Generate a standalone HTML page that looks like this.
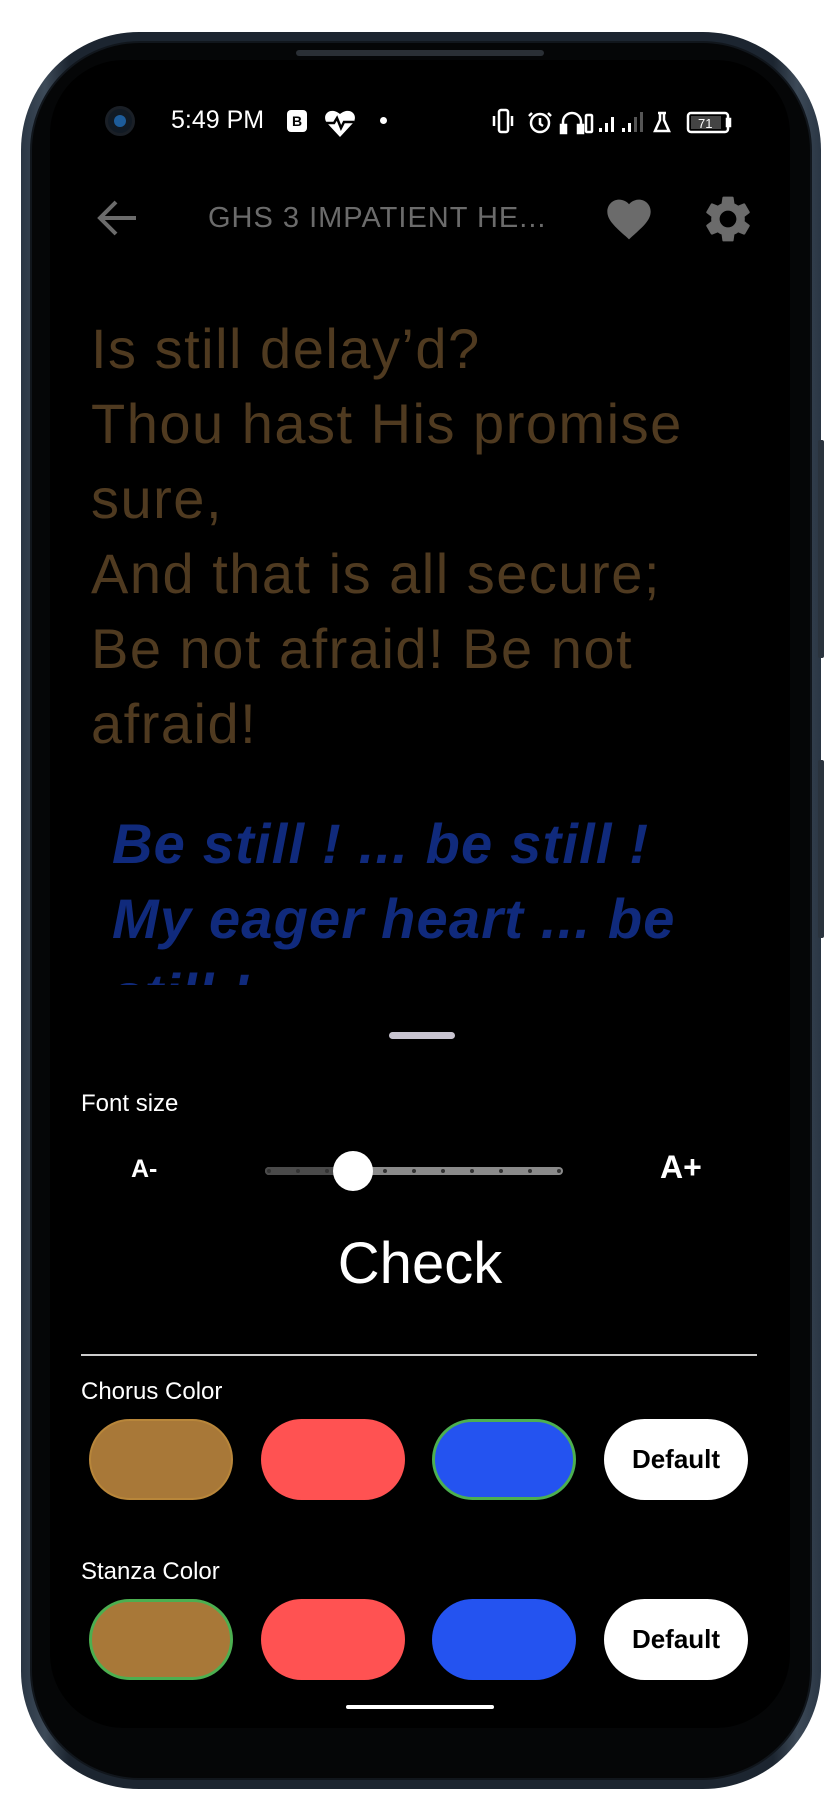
<!DOCTYPE html>
<html><head><meta charset="utf-8"><style>
*{margin:0;padding:0;box-sizing:border-box}
body{width:840px;height:1800px;background:#fff;position:relative;overflow:hidden;font-family:"Liberation Sans",sans-serif}
.frame{position:absolute;left:21px;top:32px;width:800px;height:1757px;border-radius:118px;background:linear-gradient(90deg,#2a3644,#3d4a58 3%,#1c2530 6%,#1c2530 94%,#3d4a58 97%,#2a3644);}
.bezel{position:absolute;left:9px;top:9px;right:9px;bottom:9px;border-radius:110px;background:#050607;border:2px solid #11161c}
.btn{position:absolute;right:17px;width:6px;background:#2a333d;border-radius:2px}
.abs{position:absolute}
.speaker{position:absolute;left:296px;top:50px;width:248px;height:6px;border-radius:3px;background:#2a2f35}
.lyr{position:absolute;left:91px;color:#4f3a20;font-size:56px;letter-spacing:1.5px;white-space:nowrap}
.cho{position:absolute;left:112px;color:#102a7c;font-size:56px;font-weight:bold;font-style:italic;letter-spacing:1.2px;white-space:nowrap}
.pill{position:absolute;width:144px;height:81px;border-radius:41px}
.lbl{position:absolute;left:81px;color:#fff;font-size:24px}
.def{background:#fff;color:#000;font-weight:bold;font-size:26px;display:flex;align-items:center;justify-content:center}
</style></head><body>
<div class="frame"><div class="bezel"></div></div>
<div class="btn" style="top:440px;height:218px;right:16px"></div>
<div class="btn" style="top:760px;height:178px;right:16px"></div>
<div class="speaker"></div>
<div class="abs" style="left:50px;top:60px;width:740px;height:1668px;border-radius:74px;background:#000"></div>

<div class="abs" style="left:105px;top:106px;width:30px;height:30px;border-radius:50%;background:#111a24;border:3px solid #1a1f26"></div>
<div class="abs" style="left:114px;top:115px;width:12px;height:12px;border-radius:50%;background:#1d5c9a"></div>
<div class="abs" style="left:171px;top:106px;color:#fff;font-size:25px">5:49 PM</div>
<div class="abs" style="left:287px;top:110px;width:20px;height:22px;border-radius:4px;background:#fff;color:#000;font-size:14px;font-weight:bold;text-align:center;line-height:22px">B</div>
<svg class="abs" style="left:324px;top:108px" width="32" height="30" viewBox="0 0 32 30"><path d="M16 29 L3 15 C-3 7 6 -2 16 6 C26 -2 35 7 29 15 Z" fill="#fff"/><path d="M2 15 H10 L13 10 L17 20 L20 14 H30" stroke="#000" stroke-width="2.5" fill="none"/></svg>
<div class="abs" style="left:380px;top:117px;width:7px;height:7px;border-radius:50%;background:#fff"></div>
<svg class="abs" style="left:490px;top:107px" width="255" height="30" viewBox="0 0 255 30" fill="none" stroke="#fff" stroke-width="2.5">
<rect x="9" y="3" width="9" height="22" rx="2"/><path d="M4 9v10M22 9v10"/>
<circle cx="50" cy="16" r="9"/><path d="M50 11v6l3 2M42 6l-3 3M58 6l3 3"/>
<path d="M73 25v-10a9 9 0 0 1 18 0v10"/><rect x="71" y="18" width="5" height="8" fill="#fff"/><rect x="88" y="18" width="5" height="8" fill="#fff"/>
<rect x="96" y="8" width="6" height="17" rx="1"/>
<g fill="#fff" stroke="none"><rect x="109" y="21" width="3" height="4"/><rect x="115" y="16" width="3" height="9"/><rect x="121" y="10" width="3" height="15"/><rect x="132" y="21" width="3" height="4"/><rect x="138" y="16" width="3" height="9"/><rect x="144" y="10" width="3" height="15" fill="#555"/><rect x="150" y="5" width="3" height="20" fill="#555"/></g>
<path d="M168 6h8M170 6v7l-5 11h14l-5-11v-7"/>
<rect x="198" y="6" width="40" height="19" rx="3"/><rect x="237" y="12" width="3" height="7" fill="#fff"/>
<rect x="201" y="9" width="30" height="13" fill="#444" stroke="none"/>
<text x="208" y="21" fill="#fff" stroke="none" font-size="13" font-family="Liberation Sans">71</text>
</svg>

<svg class="abs" style="left:96px;top:199px" width="42" height="38" viewBox="0 0 42 38" fill="none" stroke="#6b6b6b" stroke-width="4"><path d="M40 19H4M20 3L4 19l16 16"/></svg>
<div class="abs" style="left:208px;top:202px;color:#6b6b6b;font-size:29px;letter-spacing:1px;white-space:nowrap">GHS 3 IMPATIENT HE...</div>
<svg class="abs" style="left:603px;top:193px" width="52" height="48" viewBox="0 0 24 22"><path d="M12 21.3l-1.4-1.3C5.4 15.4 2 12.3 2 8.5 2 5.4 4.4 3 7.5 3c1.7 0 3.4.8 4.5 2.1C13.1 3.8 14.8 3 16.5 3 19.6 3 22 5.4 22 8.5c0 3.8-3.4 6.9-8.6 11.5L12 21.3z" fill="#6b6b6b"/></svg>
<svg class="abs" style="left:700px;top:191px" width="56" height="56" viewBox="0 0 24 24"><path fill="#6b6b6b" d="M19.14 12.94c.04-.3.06-.61.06-.94 0-.32-.02-.64-.07-.94l2.03-1.58a.49.49 0 0 0 .12-.61l-1.92-3.32a.488.488 0 0 0-.59-.22l-2.39.96c-.5-.38-1.03-.7-1.62-.94l-.36-2.54a.484.484 0 0 0-.48-.41h-3.84c-.24 0-.43.17-.47.41l-.36 2.54c-.59.24-1.13.57-1.62.94l-2.39-.96c-.22-.08-.47 0-.59.22L2.74 8.87c-.12.21-.08.47.12.61l2.03 1.58c-.05.3-.09.63-.09.94s.02.64.07.94l-2.03 1.58a.49.49 0 0 0-.12.61l1.92 3.32c.12.22.37.29.59.22l2.39-.96c.5.38 1.03.7 1.62.94l.36 2.54c.05.24.24.41.48.41h3.84c.24 0 .44-.17.47-.41l.36-2.54c.59-.24 1.13-.56 1.62-.94l2.39.96c.22.08.47 0 .59-.22l1.92-3.32c.12-.22.07-.47-.12-.61l-2.01-1.58zM12 15.6c-1.98 0-3.6-1.62-3.6-3.6s1.62-3.6 3.6-3.6 3.6 1.62 3.6 3.6-1.62 3.6-3.6 3.6z"/></svg>

<div class="lyr" style="top:316px">Is still delay’d?</div>
<div class="lyr" style="top:391px">Thou hast His promise</div>
<div class="lyr" style="top:466px">sure,</div>
<div class="lyr" style="top:541px">And that is all secure;</div>
<div class="lyr" style="top:616px">Be not afraid! Be not</div>
<div class="lyr" style="top:691px">afraid!</div>
<div class="abs" style="left:60px;top:790px;width:720px;height:195px;overflow:hidden">
<div class="cho" style="left:52px;top:21px">Be still ! ... be still !</div>
<div class="cho" style="left:52px;top:96px">My eager heart ... be</div>
<div class="cho" style="left:52px;top:171px">still !</div>
</div>

<div class="abs" style="left:389px;top:1032px;width:66px;height:7px;border-radius:4px;background:#c8c4d0"></div>
<div class="lbl" style="top:1090px">Font size</div>
<div class="abs" style="left:131px;top:1155px;color:#fff;font-size:25px;font-weight:bold">A-</div>
<div class="abs" style="left:660px;top:1149px;color:#fff;font-size:32px;font-weight:bold">A+</div>
<div class="abs" style="left:265px;top:1167px;width:298px;height:8px;border-radius:4px;background:#8a8a8a"></div>
<div class="abs" style="left:265px;top:1167px;width:90px;height:8px;border-radius:4px;background:#4a4a4a"></div>
<svg class="abs" style="left:265px;top:1167px" width="298" height="8"><g fill="#333"><circle cx="4" cy="4" r="2"/><circle cx="33" cy="4" r="2"/><circle cx="62" cy="4" r="2"/><circle cx="120" cy="4" r="2"/><circle cx="149" cy="4" r="2"/><circle cx="178" cy="4" r="2"/><circle cx="207" cy="4" r="2"/><circle cx="236" cy="4" r="2"/><circle cx="265" cy="4" r="2"/><circle cx="294" cy="4" r="2"/></g></svg>
<div class="abs" style="left:333px;top:1151px;width:40px;height:40px;border-radius:50%;background:#fff"></div>
<div class="abs" style="left:0;width:840px;top:1230px;text-align:center;color:#fff;font-size:58px">Check</div>
<div class="abs" style="left:81px;top:1354px;width:676px;height:2px;background:#ccc"></div>
<div class="lbl" style="top:1378px">Chorus Color</div>
<div class="pill" style="left:89px;top:1419px;background:#a87838;border:2px solid #b8863a"></div>
<div class="pill" style="left:261px;top:1419px;background:#ff5252"></div>
<div class="pill" style="left:432px;top:1419px;background:#2453f0;border:3px solid #4caf50"></div>
<div class="pill def" style="left:604px;top:1419px">Default</div>
<div class="lbl" style="top:1558px">Stanza Color</div>
<div class="pill" style="left:89px;top:1599px;background:#a87838;border:3px solid #4caf50"></div>
<div class="pill" style="left:261px;top:1599px;background:#ff5252"></div>
<div class="pill" style="left:432px;top:1599px;background:#2453f0"></div>
<div class="pill def" style="left:604px;top:1599px">Default</div>
<div class="abs" style="left:346px;top:1705px;width:148px;height:4px;border-radius:2px;background:#fff"></div>
</body></html>
